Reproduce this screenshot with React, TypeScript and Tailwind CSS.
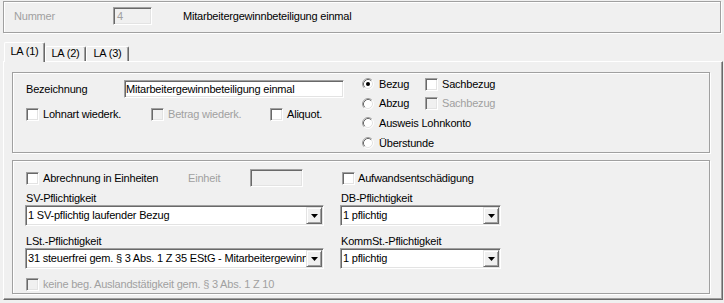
import React from "react";

const sunken =
  "border border-t-[#a0a0a0] border-l-[#a0a0a0] border-r-white border-b-white shadow-[inset_1px_1px_0_#696969,inset_-1px_-1px_0_#e3e3e3]";
const etched = "border border-[#a0a0a0] shadow-[inset_1px_1px_0_#fff,1px_1px_0_#fff]";

function Check({ disabled }: { disabled?: boolean }) {
  return (
    <span
      className={`inline-block w-[13px] h-[13px] shrink-0 ${sunken} ${
        disabled ? "bg-[#f0f0f0]" : "bg-white"
      }`}
    />
  );
}

function Radio({ checked }: { checked?: boolean }) {
  return (
    <svg width="12" height="12" viewBox="0 0 12 12" className="shrink-0">
      <circle cx="6" cy="6" r="5" fill="#fff" />
      <path d="M2.11 9.89A5.5 5.5 0 0 1 9.89 2.11" stroke="#a0a0a0" fill="none" />
      <path d="M9.89 2.11A5.5 5.5 0 0 1 2.11 9.89" stroke="#fff" fill="none" />
      <path d="M2.82 9.18A4.5 4.5 0 0 1 9.18 2.82" stroke="#696969" fill="none" />
      <path d="M9.18 2.82A4.5 4.5 0 0 1 2.82 9.18" stroke="#e3e3e3" fill="none" />
      {checked && <circle cx="6" cy="6" r="2" fill="#000" />}
    </svg>
  );
}

function Select({ wide, text }: { wide?: boolean; text: string }) {
  return (
    <div
      className={`flex h-[21px] ${wide ? "w-[299px]" : "w-[161px]"} bg-white ${sunken} p-[1px]`}
    >
      <div className="flex-1 min-w-0 overflow-hidden whitespace-nowrap pl-[1px] leading-[17px]">
        {text}
      </div>
      <div className="w-[16px] h-full shrink-0 flex items-center justify-center bg-[#f0f0f0] border border-t-[#e3e3e3] border-l-[#e3e3e3] border-r-[#696969] border-b-[#696969] shadow-[inset_1px_1px_0_#fff,inset_-1px_-1px_0_#a0a0a0]">
        <svg width="7" height="4" viewBox="0 0 7 4">
          <path d="M0 0h7L3.5 4z" fill="#000" />
        </svg>
      </div>
    </div>
  );
}

export default function App() {
  return (
    <div className="w-[724px] h-[303px] overflow-hidden bg-[#f0f0f0] text-black text-[11px] tracking-[-0.2px] font-['Liberation_Sans',Arial,sans-serif]">
      <div className="pt-[1px] px-[3px]">
        {/* top group */}
        <div className={`h-[32px] ${etched} flex items-start pt-[5px]`}>
          <span className="ml-[10px] w-[99px] leading-[18px] text-[#a0a0a0]">Nummer</span>
          <div className={`w-[39px] h-[18px] bg-[#f0f0f0] ${sunken} pl-[3px] leading-[16px] text-[#a0a0a0]`}>
            4
          </div>
          <span className="ml-[31px] leading-[18px]">Mitarbeitergewinnbeteiligung einmal</span>
        </div>

        {/* tabs */}
        <div className="relative z-10 mt-[9px] h-[20px] pl-[1px] flex items-end">
          <div className="h-[20px] w-[41px] bg-[#f0f0f0] border-l border-t border-white border-r border-r-[#696969] shadow-[inset_-1px_0_0_#a0a0a0] rounded-t-[2px] flex justify-center pt-[2px] leading-[13px]">
            LA (1)
          </div>
          <div className="h-[15px] mb-[1px] w-[41px] border-l border-t border-white border-r border-r-[#696969] shadow-[inset_-1px_0_0_#a0a0a0] rounded-t-[2px] flex justify-center leading-[13px]">
            LA (2)
          </div>
          <div className="h-[15px] mb-[1px] w-[43px] border-l border-t border-white border-r border-r-[#696969] shadow-[inset_-1px_0_0_#a0a0a0] rounded-t-[2px] flex justify-center leading-[13px]">
            LA (3)
          </div>
        </div>

        {/* panel */}
        <div className="-mt-[1px] w-[720px] h-[239px] border border-t-white border-l-white border-r-[#696969] border-b-[#696969] shadow-[inset_-1px_-1px_0_#a0a0a0] pl-[8px] pt-[10px]">
          {/* group 1 */}
          <div className={`w-[698px] h-[81px] ${etched} flex items-start`}>
            <div className="w-[331px] pl-[13px] pt-[7px]">
              <div className="flex items-center h-[18px]">
                <span className="w-[98px] leading-[18px]">Bezeichnung</span>
                <div className={`w-[220px] h-[18px] bg-white ${sunken} pl-[1px] leading-[16px] whitespace-nowrap overflow-hidden`}>
                  Mitarbeitergewinnbeteiligung einmal
                </div>
              </div>
              <div className="mt-[10px] flex items-center h-[13px] leading-[13px]">
                <div className="w-[125px] flex items-center gap-[4px]">
                  <Check />
                  <span>Lohnart wiederk.</span>
                </div>
                <div className="w-[119px] flex items-center gap-[4px]">
                  <Check disabled />
                  <span className="text-[#a0a0a0]">Betrag wiederk.</span>
                </div>
                <div className="flex items-center gap-[4px]">
                  <Check />
                  <span>Aliquot.</span>
                </div>
              </div>
            </div>
            <div className="pl-[18px] pt-[1px] leading-[13px]">
              <div className="h-[20px] flex items-center">
                <div className="w-[63px] flex items-center gap-[5px]">
                  <Radio checked />
                  <span>Bezug</span>
                </div>
                <div className="flex items-center gap-[4px]">
                  <Check />
                  <span>Sachbezug</span>
                </div>
              </div>
              <div className="h-[19px] flex items-center">
                <div className="w-[63px] flex items-center gap-[5px]">
                  <Radio />
                  <span>Abzug</span>
                </div>
                <div className="flex items-center gap-[4px]">
                  <Check disabled />
                  <span className="text-[#a0a0a0]">Sachbezug</span>
                </div>
              </div>
              <div className="h-[20px] flex items-center gap-[5px]">
                <Radio />
                <span>Ausweis Lohnkonto</span>
              </div>
              <div className="h-[20px] flex items-center gap-[5px]">
                <Radio />
                <span>Überstunde</span>
              </div>
            </div>
          </div>

          {/* group 2 */}
          <div className={`mt-[7px] w-[698px] h-[134px] ${etched} flex items-start leading-[13px]`}>
            <div className="w-[311px] pl-[12px] pt-[8px]">
              <div className="h-[18px] flex items-center">
                <div className="w-[163px] pl-[1px] flex items-center gap-[4px]">
                  <Check />
                  <span>Abrechnung in Einheiten</span>
                </div>
                <span className="w-[62px] text-[#a0a0a0]">Einheit</span>
                <div className={`w-[53px] h-[18px] bg-[#f0f0f0] ${sunken}`} />
              </div>
              <div className="mt-[5px] h-[13px] pl-[1px]">SV-Pflichtigkeit</div>
              <Select wide text="1 SV-pflichtig laufender Bezug" />
              <div className="mt-[9px] h-[13px] pl-[1px]">LSt.-Pflichtigkeit</div>
              <Select
                wide
                text="31 steuerfrei gem. § 3 Abs. 1 Z 35 EStG - Mitarbeitergewinnbeteiligung"
              />
              <div className="mt-[9px] h-[13px] pl-[1px] flex items-center gap-[4px]">
                <Check disabled />
                <span className="text-[#a0a0a0]">
                  keine beg. Auslandstätigkeit gem. § 3 Abs. 1 Z 10
                </span>
              </div>
            </div>
            <div className="ml-[16px] pt-[8px]">
              <div className="h-[18px] pl-[2px] flex items-center gap-[3px]">
                <Check />
                <span>Aufwandsentschädigung</span>
              </div>
              <div className="mt-[5px] h-[13px] pl-[1px]">DB-Pflichtigkeit</div>
              <Select text="1 pflichtig" />
              <div className="mt-[9px] h-[13px] pl-[1px]">KommSt.-Pflichtigkeit</div>
              <Select text="1 pflichtig" />
            </div>
          </div>
        </div>
      </div>
    </div>
  );
}
